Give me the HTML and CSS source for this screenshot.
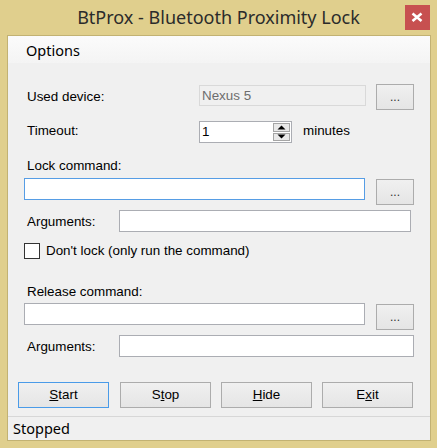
FILE: index.html
```html
<!DOCTYPE html>
<html>
<head>
<meta charset="utf-8">
<title>BtProx - Bluetooth Proximity Lock</title>
<link rel="stylesheet" href="styles.css">
</head>
<body>
<div class="window">
  <div class="titlebar">
    <span class="title-spacer"></span>
    <div class="title">BtProx - Bluetooth Proximity Lock</div>
    <div class="close" aria-label="Close">
      <svg width="25" height="25" viewBox="0 0 25 25"><path d="M7.5 8.5 L16.5 16 M16.5 8.5 L7.5 16" stroke="#fff" stroke-width="2.6" fill="none"/></svg>
    </div>
  </div>
  <div class="client">
    <div class="menubar"><span class="menu-item">Options</span></div>
    <div class="form">
      <div class="row row-device">
        <span class="lbl lbl-wide lbl-device">Used device:</span>
        <div class="field field-device">Nexus 5</div>
        <div class="btn btn-browse">...</div>
      </div>
      <div class="row row-timeout">
        <span class="lbl lbl-wide lbl-timeout">Timeout:</span>
        <div class="spin">
          <span class="spin-value">1</span>
          <div class="spin-buttons">
            <span class="spin-btn"><svg width="9" height="5" viewBox="0 0 9 5"><path d="M0.5 4.5 L4.5 0.5 L8.5 4.5 Z" fill="#000"/></svg></span>
            <span class="spin-btn"><svg width="9" height="5" viewBox="0 0 9 5"><path d="M0.5 0.5 L4.5 4.5 L8.5 0.5 Z" fill="#000"/></svg></span>
          </div>
        </div>
        <span class="lbl lbl-minutes">minutes</span>
      </div>
      <div class="lbl lbl-block lbl-lock">Lock command:</div>
      <div class="row row-cmd row-lock">
        <div class="field field-cmd field-focus"></div>
        <div class="btn btn-browse btn-cmd">...</div>
      </div>
      <div class="row row-args">
        <span class="lbl lbl-args">Arguments:</span>
        <div class="field field-args"></div>
      </div>
      <div class="row row-check">
        <span class="checkbox"></span>
        <span class="lbl lbl-check">Don't lock (only run the command)</span>
      </div>
      <div class="lbl lbl-block lbl-release">Release command:</div>
      <div class="row row-cmd row-release">
        <div class="field field-cmd"></div>
        <div class="btn btn-browse btn-cmd">...</div>
      </div>
      <div class="row row-args">
        <span class="lbl lbl-args">Arguments:</span>
        <div class="field field-args field-args-wide"></div>
      </div>
      <div class="actions">
        <div class="btn btn-action btn-default"><u>S</u>tart</div>
        <div class="btn btn-action btn-stop">S<u>t</u>op</div>
        <div class="btn btn-action"><u>H</u>ide</div>
        <div class="btn btn-action">E<u>x</u>it</div>
      </div>
    </div>
    <div class="statusbar">Stopped</div>
  </div>
</div>
</body>
</html>
```

FILE: styles.css
```css
html, body {
  margin: 0;
  padding: 0;
}

body {
  width: 437px;
  height: 448px;
  overflow: hidden;
}

.window {
  width: 437px;
  height: 448px;
  background: #e0cf8d;
  display: flex;
  flex-direction: column;
  box-sizing: border-box;
}

.titlebar {
  height: 35px;
  flex: none;
  display: grid;
  grid-template-columns: 1fr auto 1fr;
}

.title {
  font-family: "Noto Sans", sans-serif;
  font-size: 18px;
  line-height: 35px;
  color: #2b2b2b;
  white-space: nowrap;
}

.close {
  justify-self: end;
  align-self: start;
  width: 25px;
  height: 25px;
  margin-top: 5px;
  margin-right: 7px;
  background: #c75050;
}

.close svg {
  display: block;
}

.client {
  flex: 1;
  margin: 0 6px 7px 7px;
  border: 1px solid #c2b273;
  background: #f0f0f0;
  display: flex;
  flex-direction: column;
  min-height: 0;
}

.menubar {
  height: 27px;
  box-sizing: border-box;
  padding-top: 1px;
  padding-left: 18px;
  background: linear-gradient(#fbfbfb, #f4f4f4);
  font-family: "Noto Sans", sans-serif;
  font-size: 14.5px;
  line-height: 26px;
  color: #000;
  flex: none;
}

.form {
  flex: 1;
  padding-left: 16px;
  font-family: "Liberation Sans", Arial, sans-serif;
  font-size: 13.4px;
  line-height: 16px;
  color: #000;
}

.row {
  display: flex;
  align-items: flex-start;
}

.lbl {
  display: block;
  white-space: nowrap;
}

.lbl-wide {
  width: 175px;
  box-sizing: border-box;
  padding-left: 3px;
  flex: none;
}

.row-device {
  margin-top: 21px;
  height: 26px;
}

.lbl-device {
  margin-top: 5px;
}

.field {
  box-sizing: border-box;
  height: 22px;
  border: 1px solid #abadb3;
  background: #fff;
  flex: none;
}

.field-device {
  width: 167px;
  height: 21px;
  margin-top: 1px;
  border-color: #d9d9d9;
  background: #f0f0f0;
  color: #6d6d6d;
  padding-left: 2px;
  line-height: 19px;
}

.btn {
  box-sizing: border-box;
  border: 1px solid #acacac;
  background: linear-gradient(#f0f0f0, #e5e5e5);
  text-align: center;
  flex: none;
  color: #000;
}

.btn-browse {
  width: 38px;
  height: 26px;
  margin-left: 10px;
  line-height: 24px;
  font-size: 12px;
  color: #333;
}

.row-timeout {
  margin-top: 11px;
  height: 22px;
}

.lbl-timeout {
  margin-top: 2px;
}

.spin {
  width: 93px;
  height: 22px;
  box-sizing: border-box;
  border: 1px solid #abadb3;
  background: #fff;
  display: flex;
  flex: none;
}

.spin-value {
  flex: 1;
  padding-left: 2px;
  line-height: 20px;
}

.spin-buttons {
  width: 17px;
  display: flex;
  flex-direction: column;
  padding: 1px 1px 1px 0;
}

.spin-btn {
  box-sizing: border-box;
  height: 9px;
  border: 1px solid #a5a5a5;
  background: #e9e9e9;
  display: flex;
  align-items: center;
  justify-content: center;
}

.spin-btn + .spin-btn {
  margin-top: 1px;
}

.spin-btn svg {
  display: block;
}

.lbl-minutes {
  margin-left: 11px;
  margin-top: 2px;
}

.lbl-block {
  padding-left: 3px;
  height: 16px;
}

.lbl-lock {
  margin-top: 15px;
}

.row-cmd {
  height: 27px;
}

.row-lock {
  margin-top: 4px;
}

.field-cmd {
  width: 341px;
}

.field-focus {
  border-color: #569de5;
}

.btn-cmd {
  margin-left: 11px;
  margin-top: 1px;
}

.row-args {
  margin-top: 5px;
  height: 22px;
}

.lbl-args {
  width: 95px;
  box-sizing: border-box;
  padding-left: 3px;
  margin-top: 4px;
  flex: none;
}

.field-args {
  width: 292px;
}

.field-args-wide {
  width: 295px;
}

.row-check {
  margin-top: 11px;
  height: 16px;
}

.checkbox {
  box-sizing: border-box;
  width: 16px;
  height: 16px;
  border: 1px solid #333;
  background: #fff;
  flex: none;
}

.lbl-check {
  margin-left: 6px;
}

.lbl-release {
  margin-top: 25px;
}

.row-release {
  margin-top: 3px;
}

.actions {
  display: flex;
  margin-top: 25px;
  margin-left: -6px;
  gap: 10px;
}

.btn-action {
  width: 91px;
  height: 26px;
  line-height: 24px;
}

.btn-stop {
  margin-left: 1px;
}

.btn-default {
  border-color: #4a9be8;
}

.statusbar {
  flex: none;
  height: 24px;
  box-sizing: border-box;
  border-top: 1px solid #d7d7d7;
  padding-left: 5px;
  font-family: "Noto Sans", sans-serif;
  font-size: 14.5px;
  line-height: 23px;
  color: #000;
}
```
